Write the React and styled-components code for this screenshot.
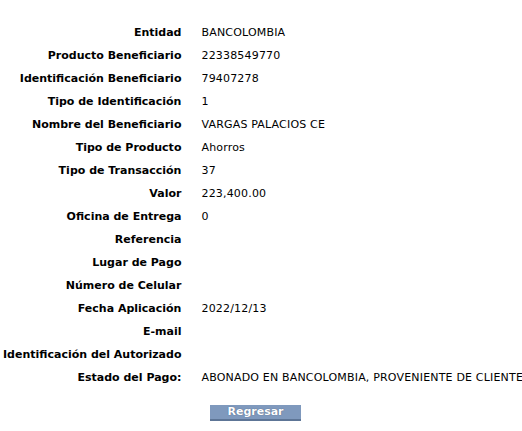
import React from 'react';
import styled, {createGlobalStyle} from 'styled-components';

const GlobalStyle = createGlobalStyle`
  body {
    margin: 0;
    background: #fff;
    font-family: Verdana, "DejaVu Sans", sans-serif;
    font-size: 11px;
    color: #000;
  }
`;

const Page = styled.div`
  width: 505px;
  padding: 21px 0 0 3px;
`;

const Grid = styled.div`
  display: grid;
  grid-template-columns: auto 1fr;
  column-gap: 20px;
  grid-auto-rows: 23px;
  align-items: center;
`;

const Label = styled.div`
  text-align: right;
  font-weight: bold;
  white-space: nowrap;
`;

const Value = styled.div`
  white-space: nowrap;
  letter-spacing: 0.18px;
`;

const Actions = styled.div`
  display: flex;
  justify-content: center;
  padding-top: 16px;
`;

const Button = styled.button`
  width: 91px;
  height: 16px;
  padding: 0;
  border: 0;
  border-bottom: 2px solid #5d7596;
  background: #7f99bd;
  color: #fff;
  font-family: Verdana, "DejaVu Sans", sans-serif;
  font-weight: bold;
  font-size: 11px;
  line-height: 14px;
  text-shadow: 0 0 1px #3c4f6c;
`;

const rows = [
  ['Entidad', 'BANCOLOMBIA'],
  ['Producto Beneficiario', '22338549770'],
  ['Identificación Beneficiario', '79407278'],
  ['Tipo de Identificación', '1'],
  ['Nombre del Beneficiario', 'VARGAS PALACIOS CE'],
  ['Tipo de Producto', 'Ahorros'],
  ['Tipo de Transacción', '37'],
  ['Valor', '223,400.00'],
  ['Oficina de Entrega', '0'],
  ['Referencia', ''],
  ['Lugar de Pago', ''],
  ['Número de Celular', ''],
  ['Fecha Aplicación', '2022/12/13'],
  ['E-mail', ''],
  ['Identificación del Autorizado', ''],
  ['Estado del Pago:', 'ABONADO EN BANCOLOMBIA, PROVENIENTE DE CLIENTE'],
];

export default function App() {
  return (
    <>
      <GlobalStyle />
      <Page>
        <Grid>
          {rows.map(([label, value]) => (
            <React.Fragment key={label}>
              <Label>{label}</Label>
              <Value>{value}</Value>
            </React.Fragment>
          ))}
        </Grid>
        <Actions>
          <Button>Regresar</Button>
        </Actions>
      </Page>
    </>
  );
}
